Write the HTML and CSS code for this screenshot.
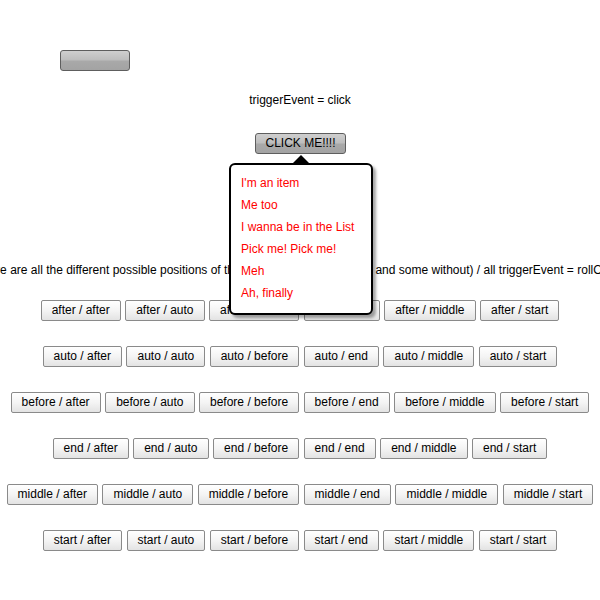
FILE: index.html
```html
<!DOCTYPE html>
<html>
<head>
<meta charset="utf-8">
<link rel="stylesheet" href="styles.css">
</head>
<body>
<div class="page">
  <div class="topbar"><button class="gray-btn empty"></button></div>
  <div class="label">triggerEvent = click</div>
  <div class="click-wrap">
    <button class="gray-btn click">CLICK ME!!!!</button>
    <div class="popup">
      <div class="arrow"></div>
      <ul class="items">
        <li>I'm an item</li>
        <li>Me too</li>
        <li>I wanna be in the List</li>
        <li>Pick me! Pick me!</li>
        <li>Meh</li>
        <li>Ah, finally</li>
      </ul>
    </div>
  </div>
  <div class="desc"><span>Here are all the different possible positions of the popup (some with arrow and some without) / all triggerEvent = rollOver</span></div>
  <div class="rows">
    <div class="row"><button class="btn">after / after</button><button class="btn">after / auto</button><button class="btn">after / before</button><button class="btn">after / end</button><button class="btn">after / middle</button><button class="btn">after / start</button></div>
    <div class="row"><button class="btn">auto / after</button><button class="btn">auto / auto</button><button class="btn">auto / before</button><button class="btn">auto / end</button><button class="btn">auto / middle</button><button class="btn">auto / start</button></div>
    <div class="row"><button class="btn">before / after</button><button class="btn">before / auto</button><button class="btn">before / before</button><button class="btn">before / end</button><button class="btn">before / middle</button><button class="btn">before / start</button></div>
    <div class="row"><button class="btn">end / after</button><button class="btn">end / auto</button><button class="btn">end / before</button><button class="btn">end / end</button><button class="btn">end / middle</button><button class="btn">end / start</button></div>
    <div class="row"><button class="btn">middle / after</button><button class="btn">middle / auto</button><button class="btn">middle / before</button><button class="btn">middle / end</button><button class="btn">middle / middle</button><button class="btn">middle / start</button></div>
    <div class="row"><button class="btn">start / after</button><button class="btn">start / auto</button><button class="btn">start / before</button><button class="btn">start / end</button><button class="btn">start / middle</button><button class="btn">start / start</button></div>
  </div>
</div>
</body>
</html>
```
FILE: styles.css
```css
html, body {
  margin: 0;
  padding: 0;
  background: #ffffff;
  overflow: hidden;
}
body {
  font-family: "Liberation Sans", Arial, sans-serif;
  font-size: 12px;
  color: #000;
}
.page {
  width: 600px;
  height: 600px;
  overflow: hidden;
}
.topbar {
  padding: 50px 0 0 60px;
  height: 21px;
}
button {
  font-family: "Liberation Sans", Arial, sans-serif;
  font-size: 12px;
  margin: 0;
  box-sizing: border-box;
  height: 21px;
  line-height: 17px;
  color: #000;
  cursor: pointer;
}
.gray-btn {
  border: 1px solid #5e5e5e;
  border-radius: 3px;
  background: linear-gradient(#cfcfcf 0%, #bdbdbd 48%, #a9a9a9 52%, #a3a3a3 100%);
  padding: 0 8px;
}
.empty {
  width: 70px;
  display: block;
}
.label {
  margin-top: 22px;
  line-height: 14px;
  text-align: center;
}
.click-wrap {
  position: relative;
  margin-top: 26px;
  display: flex;
  justify-content: center;
  height: 21px;
}
.click {
  width: 91px;
  padding: 0;
  margin-left: 1px;
}
.popup {
  position: absolute;
  top: 30px;
  left: 229px;
  width: 144px;
  height: 152px;
  box-sizing: border-box;
  background: #fff;
  border: 2px solid #000;
  border-radius: 6px;
  box-shadow: 3px 3px 3px rgba(0, 0, 0, 0.35);
  z-index: 5;
}
.arrow {
  position: absolute;
  top: -10px;
  left: 61px;
  width: 0;
  height: 0;
  border-left: 9px solid transparent;
  border-right: 9px solid transparent;
  border-bottom: 9px solid #000;
}
.items {
  list-style: none;
  margin: 0;
  padding: 11px 0 0 10px;
}
.items li {
  color: #ff0000;
  line-height: 14px;
  margin-bottom: 8px;
}
.desc {
  margin-top: 109px;
  display: flex;
  justify-content: center;
  white-space: nowrap;
  line-height: 14px;
}
.desc span {
  flex: none;
}
.rows {
  margin-top: 23px;
  display: flex;
  flex-direction: column;
  gap: 25px;
}
.row {
  display: flex;
  justify-content: center;
  gap: 4.5px;
}
.btn {
  border: 1px solid #8a8a8a;
  border-radius: 2px;
  background: linear-gradient(#ffffff 0%, #f4f4f4 50%, #e3e3e3 100%);
  padding: 0 10px;
}
```
